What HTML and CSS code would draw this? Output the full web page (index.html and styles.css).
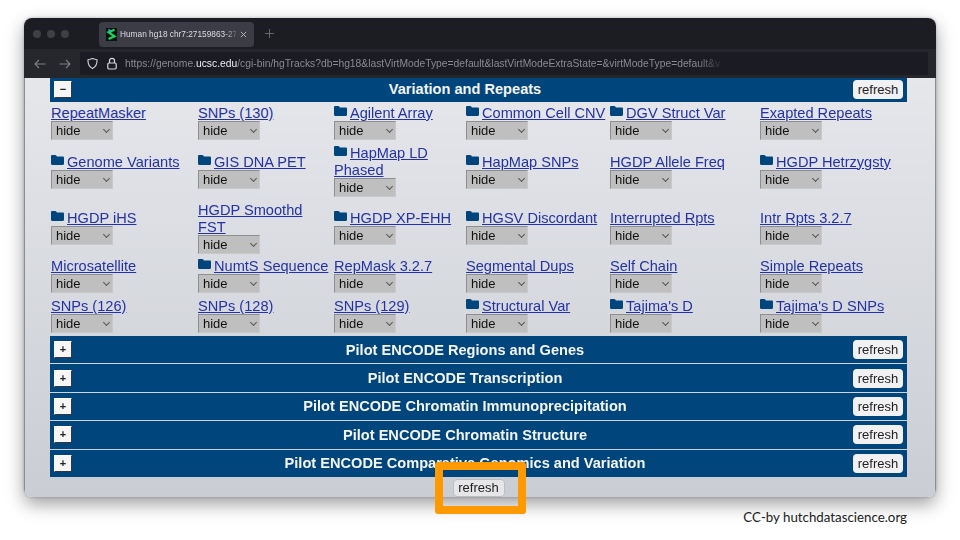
FILE: index.html
```
<!DOCTYPE html>
<html lang="en">
<head>
<meta charset="utf-8">
<title>Human hg18 chr7</title>
<link rel="stylesheet" href="styles.css">
</head>
<body>
<svg class="defs" width="0" height="0" aria-hidden="true"><symbol id="folder" viewBox="0 0 13 10"><path d="M0 1.2C0 .5.5 0 1.2 0h3c.5 0 .8.2 1.1.6l.6.9h5.900c.7 0 1.200.5 1.200 1.200v6.100c0 .7-.5 1.200-1.200 1.200H1.200C.5 10 0 9.500 0 8.800Z"/></symbol></svg>
<div class="window">
  <div class="tabbar">
    <div class="lights"><i></i><i></i><i></i></div>
    <div class="tab">
      <svg class="favicon" viewBox="0 0 11 13"><rect width="11" height="13" fill="#06140f"/><path d="M8.500 1.800 2.500 4.200 8.500 8.300 2.500 11" fill="none" stroke="#1fd15f" stroke-width="2.200"/><path d="M2.500 1.500 4.500 3" stroke="#2aa7d8" stroke-width="1.600"/></svg>
      <span class="tab-title">Human hg18 chr7:27159863-27</span>
      <svg class="tab-close" viewBox="0 0 8 8"><path d="M1 1 7 7M7 1 1 7" stroke="#c4c5ca" stroke-width="1"/></svg>
    </div>
    <svg class="newtab" viewBox="0 0 10 10"><path d="M5 0V10M0 5H10" stroke="#6e6f75" stroke-width="1"/></svg>
  </div>
  <div class="navbar">
    <svg class="nav-arrow" viewBox="0 0 12 10"><path d="M11.500 5H1M5 1 1 5 5 9" fill="none" stroke="#7c7d83" stroke-width="1.100"/></svg>
    <svg class="nav-arrow" viewBox="0 0 12 10"><path d="M.5 5H11M7 1l4 4-4 4" fill="none" stroke="#7c7d83" stroke-width="1.100"/></svg>
    <div class="urlbar">
      <svg class="shield" viewBox="0 0 12 13"><path d="M6 1 11 2.500C11 7.500 9.500 10.500 6 12 2.500 10.500 1 7.500 1 2.500Z" fill="none" stroke="#d8d8dc" stroke-width="1.200"/></svg>
      <svg class="lock" viewBox="0 0 10 13"><path d="M2.500 6V3.800a2.500 2.500 0 0 1 5 0V6" fill="none" stroke="#d8d8dc" stroke-width="1.200"/><rect x=".8" y="6" width="8.400" height="6" rx="1.200" fill="none" stroke="#d8d8dc" stroke-width="1.200"/></svg>
      <span class="url">https://genome.<b>ucsc.edu</b>/cgi-bin/hgTracks?db=hg18&amp;lastVirtModeType=default&amp;lastVirtModeExtraState=&amp;virtModeType=default&amp;v</span>
    </div>
  </div>
  <div class="page">
    <div class="bar bar-top">
      <button class="toggle">−</button>
      <div class="bar-title">Variation and Repeats</div>
      <button class="refresh">refresh</button>
    </div>
    <div class="tracks">
      <div class="cell"><a href="#">RepeatMasker</a><span class="sel"><select><option>hide</option></select></span></div>
      <div class="cell"><a href="#">SNPs (130)</a><span class="sel"><select><option>hide</option></select></span></div>
      <div class="cell"><svg class="fld"><use href="#folder"/></svg><a href="#">Agilent Array</a><span class="sel"><select><option>hide</option></select></span></div>
      <div class="cell"><svg class="fld"><use href="#folder"/></svg><a href="#">Common Cell CNV</a><span class="sel"><select><option>hide</option></select></span></div>
      <div class="cell"><svg class="fld"><use href="#folder"/></svg><a href="#">DGV Struct Var</a><span class="sel"><select><option>hide</option></select></span></div>
      <div class="cell"><a href="#">Exapted Repeats</a><span class="sel"><select><option>hide</option></select></span></div>

      <div class="cell"><svg class="fld"><use href="#folder"/></svg><a href="#">Genome Variants</a><span class="sel"><select><option>hide</option></select></span></div>
      <div class="cell"><svg class="fld"><use href="#folder"/></svg><a href="#">GIS DNA PET</a><span class="sel"><select><option>hide</option></select></span></div>
      <div class="cell"><svg class="fld"><use href="#folder"/></svg><a href="#">HapMap LD Phased</a><span class="sel"><select><option>hide</option></select></span></div>
      <div class="cell"><svg class="fld"><use href="#folder"/></svg><a href="#">HapMap SNPs</a><span class="sel"><select><option>hide</option></select></span></div>
      <div class="cell"><a href="#">HGDP Allele Freq</a><span class="sel"><select><option>hide</option></select></span></div>
      <div class="cell"><svg class="fld"><use href="#folder"/></svg><a href="#">HGDP Hetrzygsty</a><span class="sel"><select><option>hide</option></select></span></div>

      <div class="cell"><svg class="fld"><use href="#folder"/></svg><a href="#">HGDP iHS</a><span class="sel"><select><option>hide</option></select></span></div>
      <div class="cell"><a href="#">HGDP Smoothd FST</a><span class="sel"><select><option>hide</option></select></span></div>
      <div class="cell"><svg class="fld"><use href="#folder"/></svg><a href="#">HGDP XP-EHH</a><span class="sel"><select><option>hide</option></select></span></div>
      <div class="cell"><svg class="fld"><use href="#folder"/></svg><a href="#">HGSV Discordant</a><span class="sel"><select><option>hide</option></select></span></div>
      <div class="cell"><a href="#">Interrupted Rpts</a><span class="sel"><select><option>hide</option></select></span></div>
      <div class="cell"><a href="#">Intr Rpts 3.2.7</a><span class="sel"><select><option>hide</option></select></span></div>

      <div class="cell"><a href="#">Microsatellite</a><span class="sel"><select><option>hide</option></select></span></div>
      <div class="cell"><svg class="fld"><use href="#folder"/></svg><a href="#">NumtS Sequence</a><span class="sel"><select><option>hide</option></select></span></div>
      <div class="cell"><a href="#">RepMask 3.2.7</a><span class="sel"><select><option>hide</option></select></span></div>
      <div class="cell"><a href="#">Segmental Dups</a><span class="sel"><select><option>hide</option></select></span></div>
      <div class="cell"><a href="#">Self Chain</a><span class="sel"><select><option>hide</option></select></span></div>
      <div class="cell"><a href="#">Simple Repeats</a><span class="sel"><select><option>hide</option></select></span></div>

      <div class="cell"><a href="#">SNPs (126)</a><span class="sel"><select><option>hide</option></select></span></div>
      <div class="cell"><a href="#">SNPs (128)</a><span class="sel"><select><option>hide</option></select></span></div>
      <div class="cell"><a href="#">SNPs (129)</a><span class="sel"><select><option>hide</option></select></span></div>
      <div class="cell"><svg class="fld"><use href="#folder"/></svg><a href="#">Structural Var</a><span class="sel"><select><option>hide</option></select></span></div>
      <div class="cell"><svg class="fld"><use href="#folder"/></svg><a href="#">Tajima's D</a><span class="sel"><select><option>hide</option></select></span></div>
      <div class="cell"><svg class="fld"><use href="#folder"/></svg><a href="#">Tajima's D SNPs</a><span class="sel"><select><option>hide</option></select></span></div>
    </div>
    <div class="bars">
      <div class="bar"><button class="toggle">+</button><div class="bar-title">Pilot ENCODE Regions and Genes</div><button class="refresh">refresh</button></div>
      <div class="bar"><button class="toggle">+</button><div class="bar-title">Pilot ENCODE Transcription</div><button class="refresh">refresh</button></div>
      <div class="bar"><button class="toggle">+</button><div class="bar-title">Pilot ENCODE Chromatin Immunoprecipitation</div><button class="refresh">refresh</button></div>
      <div class="bar"><button class="toggle">+</button><div class="bar-title">Pilot ENCODE Chromatin Structure</div><button class="refresh">refresh</button></div>
      <div class="bar"><button class="toggle">+</button><div class="bar-title">Pilot ENCODE Comparative Genomics and Variation</div><button class="refresh">refresh</button></div>
    </div>
    <div class="foot"><button class="refresh refresh-main">refresh</button></div>
  </div>
</div>
<div class="credit">CC-by hutchdatascience.org</div>
<div class="highlight"></div>
</body>
</html>
```
FILE: styles.css
```
* { box-sizing: border-box; }
html, body { margin: 0; height: 100%; }
body { position: relative; width: 960px; height: 540px; overflow: hidden; background: #fff; font-family: "Liberation Sans", Arial, sans-serif; }
.defs { position: absolute; }
.window { margin: 18px 24px 0; height: 479px; display: flex; flex-direction: column; border-radius: 8px; overflow: hidden; box-shadow: 0 7px 18px rgba(0,0,0,.38), 0 0 3px rgba(0,0,0,.25); filter: blur(.45px); }
.tabbar { height: 31px; flex: none; background: #1c1c23; display: flex; align-items: center; }
.lights { display: flex; gap: 6px; margin-left: 9px; }
.lights i { width: 8px; height: 8px; border-radius: 50%; background: #3f4046; }
.tab { margin-left: 30px; margin-top: 1px; width: 155px; height: 25px; border-radius: 4px; background: #3b3c46; display: flex; align-items: center; padding-left: 7px; }
.favicon { width: 11px; height: 13px; flex: none; }
.tab-title { margin-left: 3px; width: 116px; color: #dcdce0; font-size: 8.300px; white-space: nowrap; -webkit-mask-image: linear-gradient(90deg, #000 90%, rgba(0,0,0,.25)); mask-image: linear-gradient(90deg, #000 90%, rgba(0,0,0,.25)); }
.tab-close { width: 7px; height: 7px; margin-left: 4px; flex: none; }
.newtab { width: 9px; height: 9px; margin-left: 11px; }
.navbar { height: 29px; flex: none; background: #26272d; display: flex; align-items: center; padding-left: 10px; }
.nav-arrow { width: 12px; height: 10px; margin-right: 13px; }
.urlbar { margin-left: -4px; width: 848px; height: 23px; background: #1b1c23; border-radius: 2px; display: flex; align-items: center; padding-left: 7px; }
.shield { width: 11px; height: 13px; flex: none; }
.lock { width: 10px; height: 13px; flex: none; margin-left: 9px; }
.url { margin-left: 8px; width: 595px; font-size: 10.300px; color: #8a8b91; white-space: nowrap; -webkit-mask-image: linear-gradient(90deg, #000 96%, rgba(0,0,0,.2)); mask-image: linear-gradient(90deg, #000 96%, rgba(0,0,0,.2)); }
.url b { color: #eeeef0; font-weight: 400; }
.page { flex: 1; padding: 0 28px 0 25px; background: linear-gradient(#e5e7eb, #cacdd4); border: solid #8c8d90; border-width: 0 1px 1px; }
.bar { height: 27.400px; background: #00457c; display: flex; align-items: center; padding: 0 4px; color: #f4f5f7; }
.bar-top { height: 24px; padding-bottom: 2px; }
.bars { display: flex; flex-direction: column; gap: 1px; }
.bar-title { flex: 1; text-align: center; padding-left: 5px; font-size: 14.600px; font-weight: 700; white-space: nowrap; }
.toggle { width: 18px; height: 17px; padding: 0; border: 1px solid; border-color: #fff #33363c #33363c #fff; background: #f6f6f6; color: #222; font: 700 11px/13px "Liberation Sans", Arial, sans-serif; }
.refresh { width: 50px; height: 19px; padding: 0; border: 0; border-radius: 4px; background: #f1f1f3; color: #222; font: 13px/19px "Liberation Sans", Arial, sans-serif; }
.tracks { display: grid; grid-template-columns: 147px 136px 132px 144px 150px 1fr; grid-template-rows: 40px 57px 56px 40px 40px; align-items: center; padding-left: 1px; margin-bottom: 1px; }
.cell { font-size: 14.600px; line-height: 17px; padding: 1px 2px 0 0; }
.cell a { color: #2332a8; text-decoration: underline; }
.fld { width: 13px; height: 10px; margin-right: 3px; fill: #00457c; vertical-align: 2px; }
.sel { display: block; position: relative; width: 62px; height: 19px; margin-top: -1px; }
.sel::after { content: ""; position: absolute; right: 4px; top: 6px; width: 4px; height: 4px; border: solid #555; border-width: 0 1px 1px 0; transform: rotate(45deg); }
.sel select { appearance: none; -webkit-appearance: none; display: block; width: 100%; height: 100%; padding: 0 0 0 4px; border: 1px solid; border-color: #8f8f8f #c8c8c8 #c8c8c8 #8f8f8f; border-radius: 0; background: #bfbfbf; color: #111; font: 13px "Liberation Sans", Arial, sans-serif; }
.foot { display: flex; justify-content: center; margin-top: 2px; }
.refresh-main { width: 52px; height: 18px; background: #e6e6e9; border: 1px solid #bdbdc2; line-height: 16px; }
.credit { margin-top: 12px; padding-right: 53px; text-align: right; font: 13.300px/16px Lato, sans-serif; color: #222; }
.highlight { position: absolute; left: 435px; top: 462px; width: 91px; height: 52px; border: 8px solid #ff9900; border-radius: 3px; }
```
